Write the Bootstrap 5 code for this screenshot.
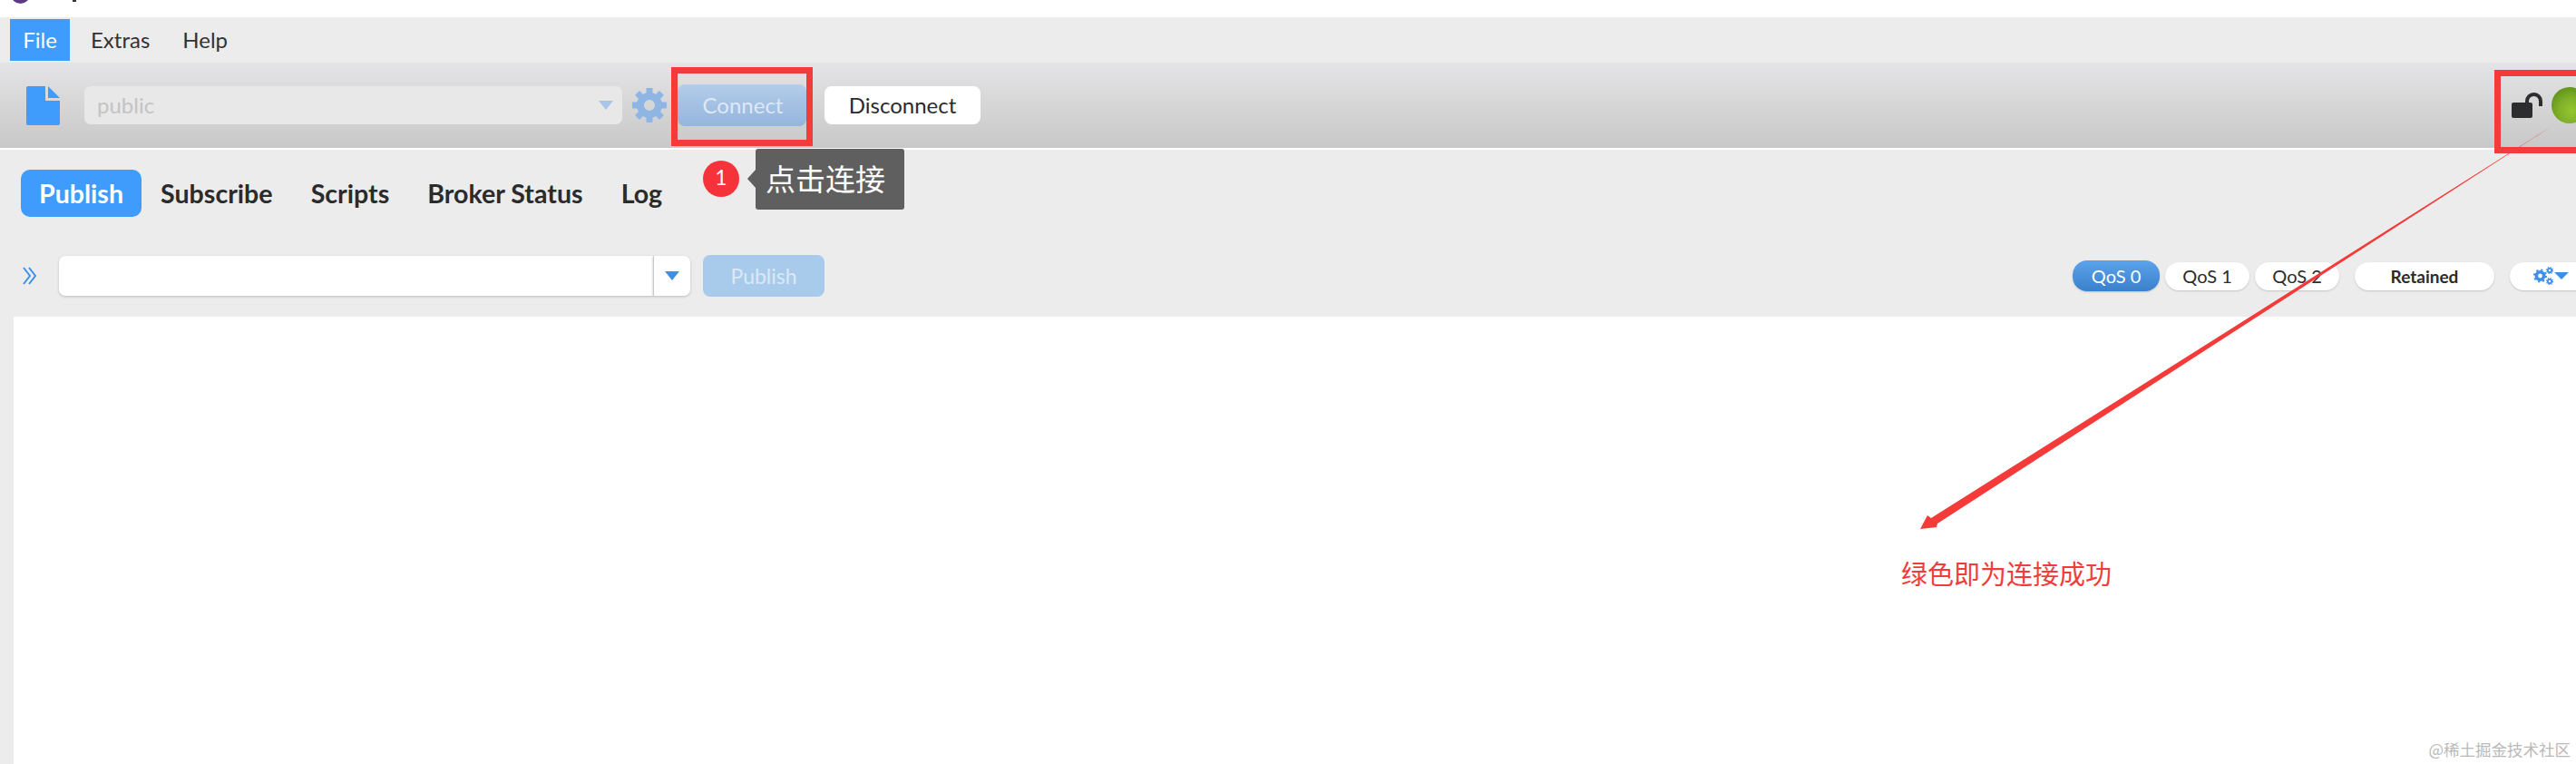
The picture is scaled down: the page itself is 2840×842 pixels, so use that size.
<!DOCTYPE html>
<html lang="zh-CN">

<head>
  <meta charset="UTF-8">
  <meta name="viewport" content="width=device-width, initial-scale=1.0">
  <title>MQTT 客户端</title>
  <link href="https://cdn.jsdelivr.net/npm/bootstrap@5.3.0/dist/css/bootstrap.min.css" rel="stylesheet">
  <style>
    html, body { height: 100%; }

    body {
      font-family: Lato, "Noto Sans CJK SC", sans-serif;
      background: #ececec;
      color: #2b2b2b;
      overflow: hidden;
    }

    .app-root { position: relative; height: 842px; overflow: hidden; }

    /* 上方被裁掉的標題列 */
    .title-strip { height: 19px; background: #fff; position: relative; overflow: hidden; }
    .title-logo { position: absolute; left: 12px; top: -17px; width: 21px; height: 21px; background: #5b3a86; }
    .title-cut { position: absolute; left: 80px; top: 0; width: 4px; height: 2px; background: #333; }

    .menu-bar { height: 50px; padding: 2px 0 2px 11px; font-size: 24px; background: #ececec; }
    .menu-item { padding: 0 16px; margin-right: 6px; color: #333; line-height: 46px; }
    .menu-item.on { width: 66px; padding: 0; margin-right: 7px; text-align: center; background: #3f9bfc; color: #fff; }
    .menu-item.tight { margin-right: 4px; }

    .tool-bar {
      height: 96px;
      padding: 0 0 0 29px;
      background: linear-gradient(#e4e4e6, #c8c8c8);
      border-bottom: 2px solid #fff;
    }
    .doc-icon { width: 37px; height: 43px; margin-right: 27px; }
    .conn-select {
      width: 593px;
      height: 42px;
      padding: 0 10px 0 14px;
      font-size: 24px;
      color: #c3c3c3;
      background: #e8e8e8;
      border-radius: 7px;
    }
    .caret { width: 0; height: 0; border-left: 8px solid transparent; border-right: 8px solid transparent; border-top: 10px solid #a9c5e8; }
    .gear-big { width: 38px; height: 38px; margin: 0 12px 0 11px; }
    .btn-connect {
      width: 142px;
      height: 46px;
      padding: 0 0 0 2px;
      font-size: 24px;
      color: #dde8f5;
      background: linear-gradient(#b3cdea, #94b5dc);
      border: 0;
      border-radius: 8px;
    }
    .btn-disconnect {
      width: 172px;
      height: 42px;
      padding: 0;
      margin-left: 20px;
      font-size: 24px;
      color: #2b2b2b;
      background: #fff;
      border: 0;
      border-radius: 8px;
    }
    .lock-icon { width: 36px; height: 30px; margin-right: 8px; }
    .status-ball {
      width: 40px;
      height: 40px;
      margin-right: -13px;
      background: radial-gradient(circle at 55% 65%, #94c730 0, #7fb028 42%, #4f8114 100%);
    }

    .tab-row { margin: 22px 0 0 23px; }
    .tab-row .nav-link {
      height: 52px;
      padding: 0 21px;
      font-size: 28.6px;
      font-weight: 700;
      line-height: 52px;
      color: #2b2b2b;
      border-radius: 10px;
    }
    .tab-row .nav-link.active { padding: 0 20px; background: #3f9bfc; color: #fff; }

    .publish-row { height: 46px; margin-top: 42px; padding-left: 25px; }
    .chevrons { width: 16px; height: 20px; margin-right: 24px; }
    .topic-group { width: 696px; }
    .topic-group .form-control { height: 44px; border: 0; border-radius: 7px 0 0 7px; box-shadow: 0 1px 3px #bbb; }
    .topic-caret {
      width: 41px;
      height: 44px;
      background: #fff;
      border-left: 1px solid #c8c8c8;
      border-radius: 0 7px 7px 0;
      box-shadow: 0 1px 3px #bbb;
    }
    .topic-caret .caret { border-top-color: #3f8fe6; }
    .btn-publish {
      width: 134px;
      height: 46px;
      padding: 0;
      margin-left: 14px;
      font-size: 23px;
      color: #dbe8f6;
      background: #a9cbeb;
      border: 0;
      border-radius: 8px;
    }

    .qos-pill {
      height: 31px;
      padding: 0;
      font-size: 20px;
      line-height: 31px;
      text-align: center;
      color: #2b2b2b;
      background: #fff;
      border: 0;
      border-radius: 16px;
      box-shadow: 0 1px 2px #c4c4c4;
    }
    .qos-w { width: 93px; margin-left: 6px; }
    .qos-on {
      width: 96px;
      height: 34px;
      margin-left: 0;
      line-height: 34px;
      color: #fff;
      background: linear-gradient(#5ba3ea, #3a80cc);
    }
    .qos-ret { width: 154px; margin-left: 17px; font-weight: 700; font-size: 19px; }
    .qos-gear { width: 90px; margin: 0 -17px 0 17px; padding-left: 26px; }
    .gear-small { width: 22px; height: 22px; }
    .qos-gear .caret { border-top-color: #3f8fe6; border-top-width: 8px; margin-left: 1px; }

    .msg-panel { height: 493px; margin: 22px 0 0 15px; background: #fff; }

    /* 截圖上的標註 */
    .mark-box { position: absolute; border: 7px solid #f53a3a; }
    .mark-connect { left: 740px; top: 74px; width: 156px; height: 87px; }
    .mark-status { left: 2750px; top: 77px; width: 110px; height: 92px; }
    .mark-tip { position: absolute; left: 775px; top: 164px; }
    .step-dot {
      width: 40px;
      height: 40px;
      margin-top: -1px;
      font-size: 23px;
      line-height: 36px;
      text-align: center;
      color: #fff;
      background: #f6333a;
    }
    .tip-box {
      position: relative;
      width: 164px;
      height: 67px;
      margin-left: 18px;
      padding-left: 11px;
      font-size: 33px;
      line-height: 66px;
      color: #fff;
      background: #5f5f5f;
      border-radius: 3px;
    }
    .tip-box::before {
      content: "";
      position: absolute;
      left: -9px;
      top: 23px;
      border-top: 10px solid transparent;
      border-bottom: 10px solid transparent;
      border-right: 9px solid #5f5f5f;
    }
    .mark-arrow { position: absolute; left: 0; top: 0; width: 2840px; height: 842px; pointer-events: none; }
    .mark-text {
      position: absolute;
      left: 2096px;
      top: 610px;
      font-family: "Noto Sans CJK SC", sans-serif;
      font-size: 29px;
      line-height: 42px;
      color: #f23c3c;
    }
    .water-mark {
      position: absolute;
      right: 6px;
      top: 814px;
      font-family: "Noto Sans CJK SC", sans-serif;
      font-size: 17.5px;
      line-height: 24px;
      color: #b9b9b9;
    }
  </style>
</head>

<body>
  <div class="app-root">
    <div class="title-strip">
      <span class="title-logo rounded-circle"></span>
      <span class="title-cut"></span>
    </div>

    <!-- 選單列 -->
    <div class="menu-bar d-flex">
      <span class="menu-item on">File</span>
      <span class="menu-item tight">Extras</span>
      <span class="menu-item">Help</span>
    </div>

    <!-- 工具列 -->
    <div class="tool-bar d-flex align-items-center">
      <svg class="doc-icon" viewBox="0 0 37 43">
        <path fill="#3f9bfc" d="M2 0H21V16H37V41a2 2 0 0 1-2 2H2a2 2 0 0 1-2-2V2a2 2 0 0 1 2-2Z" />
        <path fill="#3f9bfc" d="M24 0 37 13H24Z" />
      </svg>
      <div class="conn-select d-flex align-items-center justify-content-between">
        <span>public</span>
        <span class="caret"></span>
      </div>
      <svg class="gear-big" viewBox="-19 -19 38 38">
        <circle r="10" fill="none" stroke="#8fb5e4" stroke-width="8" />
        <g fill="#8fb5e4">
          <path d="M-3.500-19H3.500V-12H-3.500Z" />
          <path d="M-3.500-19H3.500V-12H-3.500Z" transform="rotate(45)" />
          <path d="M-3.500-19H3.500V-12H-3.500Z" transform="rotate(90)" />
          <path d="M-3.500-19H3.500V-12H-3.500Z" transform="rotate(135)" />
          <path d="M-3.500-19H3.500V-12H-3.500Z" transform="rotate(180)" />
          <path d="M-3.500-19H3.500V-12H-3.500Z" transform="rotate(225)" />
          <path d="M-3.500-19H3.500V-12H-3.500Z" transform="rotate(270)" />
          <path d="M-3.500-19H3.500V-12H-3.500Z" transform="rotate(315)" />
        </g>
      </svg>
      <button class="btn btn-connect" type="button">Connect</button>
      <button class="btn btn-disconnect" type="button">Disconnect</button>
      <svg class="lock-icon ms-auto" viewBox="0 0 36 30">
        <rect x="0" y="12" width="23" height="17" rx="2" fill="#2d2d30" />
        <path d="M17 13V10.500a7.500 7.500 0 0 1 15 0V16" fill="none" stroke="#2d2d30" stroke-width="4" />
      </svg>
      <span class="status-ball rounded-circle"></span>
    </div>

    <!-- 分頁 -->
    <ul class="nav nav-pills tab-row">
      <li class="nav-item"><a class="nav-link active" href="#">Publish</a></li>
      <li class="nav-item"><a class="nav-link" href="#">Subscribe</a></li>
      <li class="nav-item"><a class="nav-link" href="#">Scripts</a></li>
      <li class="nav-item"><a class="nav-link" href="#">Broker Status</a></li>
      <li class="nav-item"><a class="nav-link" href="#">Log</a></li>
    </ul>

    <!-- 發佈列 -->
    <div class="publish-row d-flex align-items-center">
      <svg class="chevrons" viewBox="0 0 16 20">
        <path d="M1 1 8 10 1 19M7 1 14 10 7 19" fill="none" stroke="#3f8fe6" stroke-width="2" />
      </svg>
      <div class="topic-group d-flex">
        <input class="form-control" type="text">
        <span class="topic-caret flex-shrink-0 d-flex align-items-center justify-content-center"><span class="caret"></span></span>
      </div>
      <button class="btn btn-publish" type="button">Publish</button>
      <div class="ms-auto d-flex align-items-center">
        <button class="btn qos-pill qos-on" type="button">QoS 0</button>
        <button class="btn qos-pill qos-w" type="button">QoS 1</button>
        <button class="btn qos-pill qos-w" type="button">QoS 2</button>
        <button class="btn qos-pill qos-ret" type="button">Retained</button>
        <div class="qos-pill qos-gear d-flex align-items-center">
          <svg class="gear-small" viewBox="0 0 22 22">
            <g fill="none" stroke="#3f8fe6">
              <circle cx="7.500" cy="11" r="4.200" stroke-width="3.600" />
              <circle cx="7.500" cy="11" r="6.500" stroke-width="2" stroke-dasharray="2.200 2.900" />
              <circle cx="18" cy="5" r="2.200" stroke-width="1.800" />
              <circle cx="18" cy="5" r="3.500" stroke-width="1.200" stroke-dasharray="1.300 1.450" />
              <circle cx="18" cy="17" r="2.200" stroke-width="1.800" />
              <circle cx="18" cy="17" r="3.500" stroke-width="1.200" stroke-dasharray="1.300 1.450" />
            </g>
          </svg>
          <span class="caret"></span>
        </div>
      </div>
    </div>

    <div class="msg-panel"></div>

    <!-- 標註 -->
    <svg class="mark-arrow" viewBox="0 0 2840 842">
      <polygon fill="#f53a3a" points="2812,140 2136,577 2135,581 2117,583 2125,568 2129,571" />
    </svg>
    <div class="mark-box mark-connect"></div>
    <div class="mark-box mark-status"></div>
    <div class="mark-tip d-flex align-items-center">
      <span class="step-dot rounded-circle">1</span>
      <span class="tip-box">点击连接</span>
    </div>
    <div class="mark-text">绿色即为连接成功</div>
    <div class="water-mark">@稀土掘金技术社区</div>
  </div>

  <script src="https://cdn.jsdelivr.net/npm/bootstrap@5.3.0/dist/js/bootstrap.bundle.min.js"></script>
</body>

</html>
